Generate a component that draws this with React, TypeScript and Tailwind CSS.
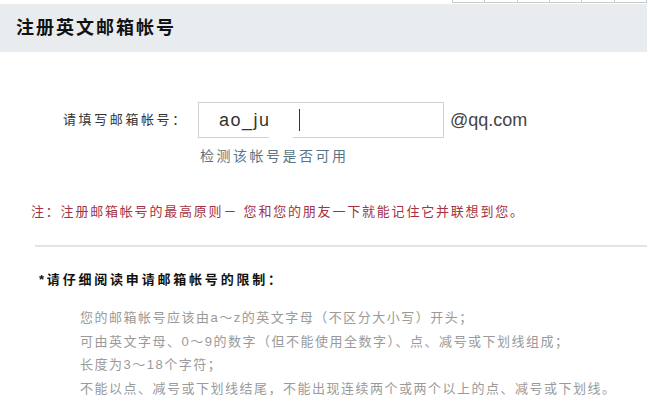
const cjk = { fontFamily: '"Liberation Sans", "Noto Sans CJK SC", sans-serif' };

const rules = [
  '您的邮箱帐号应该由a～z的英文字母（不区分大小写）开头；',
  '可由英文字母、0～9的数字（但不能使用全数字）、点、减号或下划线组成；',
  '长度为3～18个字符；',
  '不能以点、减号或下划线结尾，不能出现连续两个或两个以上的点、减号或下划线。',
];

export default function App() {
  return (
    <div className="w-[647px] h-[414px] bg-white overflow-hidden" style={cjk}>
      {/* stray table edge at the top */}
      <div className="flex justify-end h-[3px]">
        <div className="flex w-[195px] h-[3px] border-l border-b border-[#c8ccc8]">
          {[0, 1, 2, 3, 4, 5].map((i) => (
            <div key={i} className="w-[33px] h-full border-r border-[#c8ccc8]" />
          ))}
        </div>
      </div>

      {/* title bar */}
      <div className="mt-[1px] h-[48px] bg-[#e9ecef] flex items-center pl-[16px]">
        <h1 className="text-[18px] font-bold text-[#111] tracking-[2px] leading-none">注册英文邮箱帐号</h1>
      </div>

      {/* input row */}
      <div className="flex items-center mt-[50px] h-[36px]">
        <span className="ml-[63px] w-[135px] text-[13px] text-[#333] tracking-[2.6px]">请填写邮箱帐号：</span>
        <div className="relative w-[246px] h-[36px] border border-[#cfcfcf] flex items-center">
          <span className="ml-[20px] text-[18px] text-[#333] tracking-[1.5px]">ao_ju</span>
          <span className="ml-[28px] w-[1px] h-[22px] bg-[#333]" />
          <span className="absolute left-[70px] bottom-[-1px] w-[24px] h-[1px] bg-white" />
        </div>
        <span className="ml-[6px] text-[18px] text-[#444]">@qq.com</span>
      </div>
      <div className="ml-[200px] mt-[8px] text-[14px] text-[#5b7585] leading-[20px] tracking-[2.5px]">检测该帐号是否可用</div>

      {/* note */}
      <p className="ml-[31px] mt-[38px] text-[13px] text-[#a33343] leading-[16px] tracking-[1.8px]">
        注：注册邮箱帐号的最高原则－ 您和您的朋友一下就能记住它并联想到您。
      </p>

      <div className="ml-[35px] mt-[25px] h-[2px] bg-[#e4e4e4]" />

      {/* rules */}
      <h2 className="ml-[39px] mt-[25px] text-[13px] font-bold text-[#111] leading-[16px] tracking-[2.8px]">*请仔细阅读申请邮箱帐号的限制：</h2>
      <ul className="ml-[80px] mt-[22px] flex flex-col gap-[7.5px]">
        {rules.map((r) => (
          <li key={r} className="text-[13px] text-[#9a9a9a] leading-[16px] tracking-[1.5px]">{r}</li>
        ))}
      </ul>
    </div>
  );
}
